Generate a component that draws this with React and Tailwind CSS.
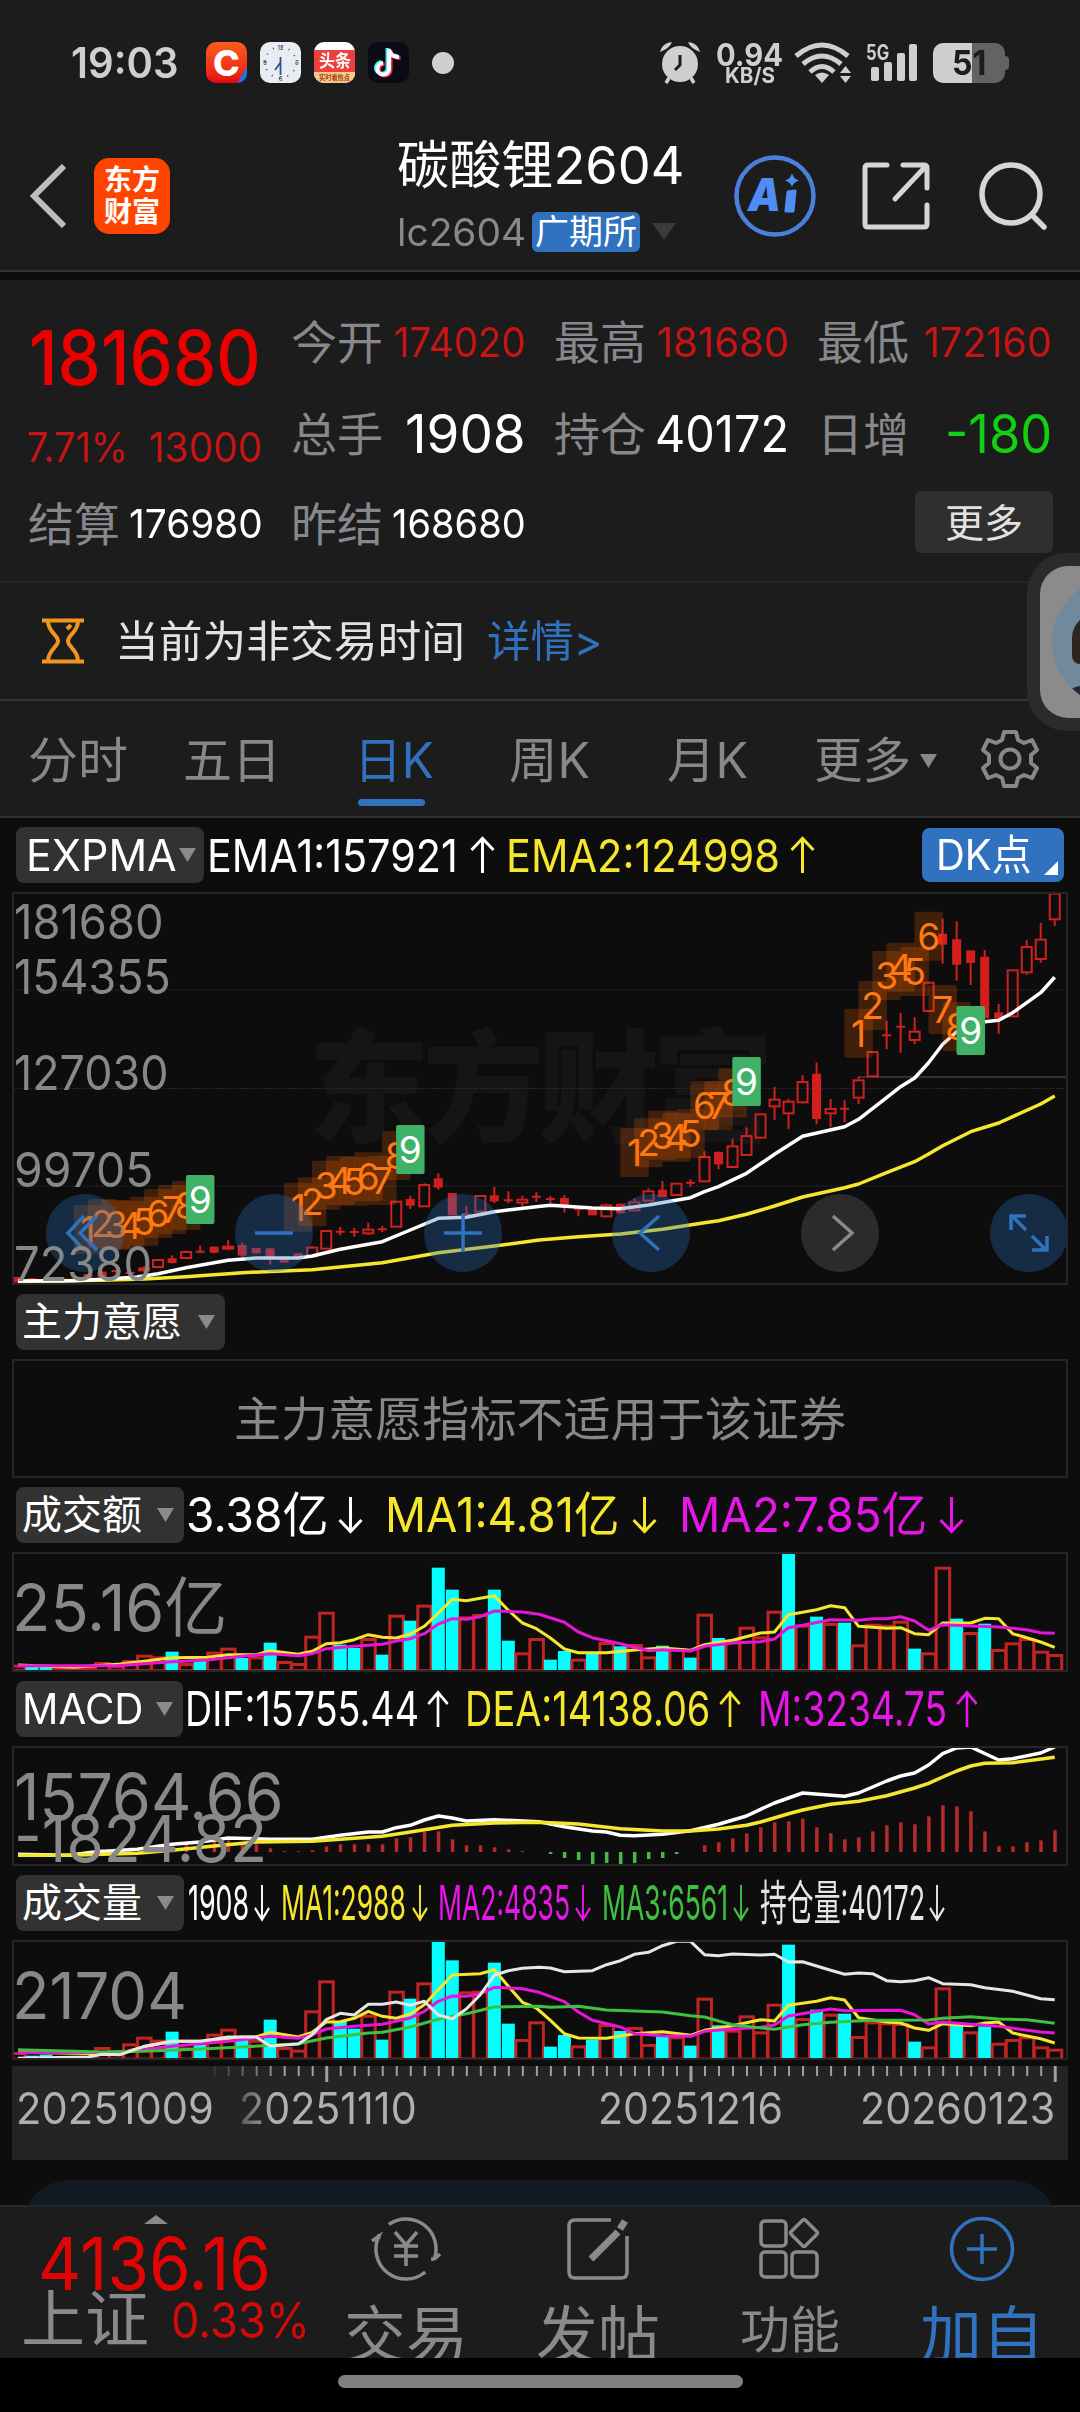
import React, { useLayoutEffect, useRef, useState } from 'react';

const FONT = "font-['Inter','Noto_Sans_CJK_SC',sans-serif]";

// Single line of text squeezed or stretched to a fixed width
function Fit({ w, className = '', children }) {
  const ref = useRef(null);
  const [scale, setScale] = useState(1);

  useLayoutEffect(() => {
    setScale(w / ref.current.offsetWidth);
  }, [w, children]);

  return (
    <span className={`block shrink-0 leading-none whitespace-nowrap ${className}`} style={{ width: w }}>
      <span ref={ref} className="inline-block origin-left" style={{ transform: `scaleX(${scale})` }}>
        {children}
      </span>
    </span>
  );
}

function Arrow({ up, w = 25, className = '' }) {
  return (
    <svg
      width={w}
      height="38"
      viewBox="0 0 25 38"
      preserveAspectRatio="none"
      className={`shrink-0 ${up ? '' : 'rotate-180'} ${className}`}
      fill="none"
      stroke="currentColor"
      strokeWidth="3"
    >
      <path d="M12.5 37V3M1.5 14L12.5 2.5L23.5 14" />
    </svg>
  );
}

function Caret({ className = '' }) {
  return (
    <svg width="17" height="14" viewBox="0 0 17 14" className={`shrink-0 ${className}`}>
      <path d="M0 0H17L8.5 14Z" fill="currentColor" />
    </svg>
  );
}

/* ---------- chart data ---------- */

const N = 75;
const X = (i) => 6 + 14.01 * i;

// [body top, body bottom, high, low, kind]  f = filled, h = hollow, x = doji
const CANDLES = [
  [1194, 1204, 1190, 1210, 'f'], [1198, 1202, 1196, 1204, 'x'], [1207, 1213, 1205, 1215, 'f'], [1198, 1206, 1193, 1210, 'f'],
  [1200, 1202, 1197, 1204, 'x'], [1185, 1194, 1183, 1196, 'f'], [1178, 1188, 1174, 1192, 'f'], [1173, 1175, 1170, 1178, 'x'],
  [1179, 1181, 1176, 1184, 'x'], [1162, 1174, 1158, 1176, 'h'], [1137, 1164, 1137, 1164, 'h'], [1138, 1146, 1126, 1150, 'f'],
  [1113, 1137, 1113, 1137, 'h'], [1115, 1117, 1097, 1120, 'x'], [1103, 1115, 1100, 1120, 'f'], [1097, 1109, 1080, 1111, 'h'],
  [1098, 1124, 1087, 1131, 'f'], [1107, 1117, 1105, 1120, 'f'], [1108, 1132, 1103, 1154, 'f'], [1139, 1143, 1137, 1146, 'f'],
  [1123, 1130, 1120, 1133, 'f'], [1100, 1132, 1098, 1134, 'h'], [1050, 1109, 1050, 1109, 'h'], [1055, 1057, 1040, 1066, 'x'],
  [1056, 1058, 1043, 1070, 'x'], [1046, 1063, 1028, 1065, 'h'], [1048, 1050, 1038, 1056, 'x'], [962, 1043, 962, 1043, 'h'],
  [960, 974, 947, 987, 'f'], [912, 982, 910, 982, 'h'], [898, 920, 880, 929, 'f'], [942, 1003, 942, 1003, 'f'],
  [1003, 1005, 978, 1006, 'x'], [945, 998, 945, 998, 'h'], [949, 961, 921, 969, 'f'], [961, 963, 934, 969, 'x'],
  [956, 971, 947, 979, 'h'], [950, 952, 937, 965, 'x'], [957, 959, 948, 970, 'x'], [957, 974, 946, 998, 'f'],
  [988, 990, 983, 1009, 'x'], [989, 1003, 987, 1004, 'f'], [973, 1012, 970, 1012, 'h'], [974, 997, 972, 1000, 'f'],
  [964, 994, 955, 994, 'h'], [931, 965, 925, 965, 'h'], [932, 948, 903, 950, 'f'], [908, 948, 908, 948, 'h'],
  [908, 911, 898, 920, 'x'], [828, 907, 814, 907, 'h'], [819, 850, 814, 868, 'f'], [796, 864, 776, 864, 'h'],
  [765, 828, 742, 828, 'h'], [700, 776, 700, 776, 'h'], [656, 682, 621, 719, 'h'], [662, 703, 656, 747, 'h'],
  [603, 670, 586, 670, 'h'], [584, 714, 548, 733, 'f'], [684, 703, 657, 742, 'h'], [686, 688, 661, 727, 'x'],
  [598, 656, 590, 672, 'h'], [513, 592, 513, 592, 'h'], [466, 468, 422, 508, 'x'], [440, 442, 399, 518, 'x'],
  [452, 483, 412, 492, 'h'], [305, 396, 305, 396, 'h'], [164, 191, 116, 251, 'f'], [181, 251, 124, 302, 'f'],
  [214, 246, 212, 315, 'f'], [233, 412, 210, 412, 'f'], [400, 412, 372, 461, 'f'], [268, 412, 268, 412, 'h'],
  [198, 280, 181, 285, 'h'], [176, 240, 129, 248, 'h'], [38, 121, 38, 138, 'h'],
];

const EMA1 =
  '0,1203 4,1202 6,1198 8.5,1191 10,1181 12,1163 15,1141 17,1134 20,1134 21,1128 23,1108 26,1085 28,1050 30,1015 32,1012 34,995 37,980 38,976 41,984 43,986 45,975 48,953 49,935 50,920 52,880 54,823 56,769 59,740 60,718 62,653 63,620 64,594 65,548 66,493 67,455 68,440 69,425 70,421 71,398 73,338 74,292';
const EMA2 =
  '0,1204 6,1201 9,1197 12,1190 16,1178 21,1169 26,1148 30,1118 34,1098 37.2,1080 40,1070 43,1062 46,1048 49,1028 50,1022 52,1003 54,978 56,951 59,923 60,912 62,878 64,845 65,822 66,797 68,755 70,729 73,672 74,648';

// nine-count markers: first bar index and the top of each tag
const COUNTS = [
  { start: 5, tops: [975, 957, 960, 962, 950, 927, 915, 903, 885] },
  { start: 20, tops: [908, 892, 842, 828, 830, 817, 828, 753, 735] },
  { start: 44, tops: [744, 715, 692, 698, 688, 603, 603, 565, 531] },
  { start: 60, tops: [386, 303, 213, 188, 201, 95, 315, 366, 378] },
];

const DOWN = [1, 2, 11, 13, 16, 18, 23, 24, 26, 28, 30, 31, 34, 35, 38, 39, 41, 43, 46, 48, 50, 55, 57, 59, 64, 67, 69];

const AMOUNT = [
  555, 560, 558, 562, 562, 560, 547, 556, 541, 525, 530, 516, 550, 540, 516, 504, 535, 530, 489, 544, 550, 468, 396, 495, 505,
  475, 525, 405, 423, 375, 264, 330, 410, 403, 330, 483, 518, 475, 540, 514, 537, 520, 487, 500, 493, 530, 498, 506, 534, 402,
  475, 480, 441, 470, 393, 219, 435, 411, 430, 429, 494, 432, 435, 423, 507, 518, 261, 417, 457, 432, 508, 488, 475, 513, 523,
];
const AMOUNT_MA1 =
  '0,556 4,563 7.3,553 9,545 11,534 13.5,533 15,525 17,525 18,513 20,524 21,515 22,492 23,489 24,480 25,465 26,473 27,475 28,463 29,440 30,400 31,359 32,363 33,356 34,348 35,392 36,430 37,447 38,475 39,508 40,519 42,519 44,511 46,505 48,512 49,495 51,482 53,460 54,457 55,405 57,390 58,378 59,384 60,440 62,446 63,444 64,462 65,465 66,430 68,430 69,416 70,417 71,462 72,474 73,487 74,503';
const AMOUNT_MA2 =
  '0,558 7,558 11,546 13.5,541 16,530 18,522 20,528 21,522 22,507 24,500 26,494 27,484 28,477 29,462 30,433 31,417 32,419 33,411 34,394 36,397 37.2,404 39,428 40,457 41,474 43,492 45,513 46,510 48,514 49,500 51,490 53,486 54,478 55,444 56,437 58,420 60,422 61,417 62,417 63,411 64,424 65,452 66,435 68,439 70,442 72,450 73,459 74,461';

const VOLUME = [
  577, 588, 585, 590, 590, 588, 562, 572, 551, 531, 540, 516, 563, 555, 522, 507, 540, 540, 480, 562, 570, 452, 362, 484, 507,
  465, 540, 393, 417, 368, 243, 302, 395, 393, 309, 492, 538, 485, 561, 526, 557, 540, 493, 514, 502, 553, 530, 530, 558, 414,
  497, 510, 467, 515, 432, 255, 475, 450, 462, 462, 529, 485, 488, 490, 546, 560, 383, 497, 515, 500, 549, 538, 530, 560, 567,
];
const VOLUME_MA1 =
  '0,578 6,582 7.3,580 9,562 11,545 13.5,545 16,532 17,532 18,518 20,532 21,518 22,487 23,486 24,476 25,455 26,470 27,476 28,463 29,435 30,390 31,346 33,342 34,330 35,380 36,428 37,445 38,482 39,522 40,535 42,536 44,522 46,516 48,527 49,512 51,498 53,480 54,484 55,437 57,425 58,414 59,421 60,474 62,487 63,490 64,505 65,512 66,492 68,498 69,490 70,487 71,520 73,537 74,550';
const VOLUME_MA2 =
  '0,579 7.3,578 11,560 15,545 18,530 20,536 21,525 22,508 24,500 26,494 28,475 29,455 30,425 31,409 32,410 33,402 34,383 36,387 37.2,398 39,426 40,457 41,482 43,502 44,522 46,528 48,530 49,515 51,508 53,503 54,496 55,469 58,448 59,453 63,452 64,465 65,493 66,487 68,494 70,500 73,517 74,520';
const VOLUME_MA3 =
  '0,570 6,577 9,575 13,568 16,562 20,552 22,535 25,520 26,518 28,502 30,479 32,462 34,442 37.2,440 38,443 40,440 42,451 46,457 48,468 49,472 50,484 51,495 54,509 56,495 58,488 61,482 65,481 66,476 68,471 70,478 72,480 74,491';
const OPEN_INTEREST =
  '0,596 5,592 6,584 7.3,585 9,560 11,545 13,545 15,532 17,532 18,559 20,553 21,525 22,480 23,461 24,466 25,434 26,434 27,427 28,437 29,425 30,466 31,477 32,448 33,405 34,347 35,333 36,326 37.2,323 38,325 39,336 41,333 42,315 43,303 44,284 45,278 46,258 47,245 48,245 49,285 50,288 51,283 53,286 54,284 55,307 56,306 58,332 59,344 60,340 61,342 62,363 63,366 64,363 65,354 66,372 68,375 69,384 71,395 73,417 74,420';

const MACD = [
  0, 0, 0, 0, 0, 4, 8, 0, 13, 8, 23, 26, 31, 0, 36, 35, 26, 23, 11, 3, 2, 5, 17, 23, 23, 23, 23, 41, 44, 61, 62, 38, 20, 20, 14,
  8, 3, 0, -6, -18, -24, -36, -33, -39, -33, -21, -18, -6, 0, 20, 29, 41, 56, 74, 89, 92, 100, 74, 56, 38, 44, 62, 80, 89, 83,
  107, 140, 137, 122, 62, 17, 17, 29, 35, 65,
];
const DIF =
  '0,1125 3.6,1128 5.6,1117 8.5,1110 11,1095 13,1088 15,1076 18,1080 21,1080 23,1068 25,1058 26,1058 27,1045 28,1038 29,1022 30,1010 31,1016 32,1025 34,1021 37.2,1027 39,1042 41,1055 42,1058 43,1068 44,1069 46,1065 48,1054 50,1035 52,1010 53,990 54,971 56,941 59,951 60,941 62,905 63,890 64,881 65,857 66,823 67,806 68,803 70,842 71,838 73,821 74,803';
const DEA =
  '0,1128 3.6,1128 8.5,1122 11,1113 14,1100 17,1088 21,1086 26,1071 28,1058 31,1038 34,1031 37.2,1029 40,1034 43,1048 46,1055 48,1055 50,1049 52,1038 53,1028 55,1003 56,992 58,975 60,966 62,949 64,926 65,912 66,893 67,875 68,860 69,852 71,850 74,834';

function Line({ pts, top, color, width = 3 }) {
  const points = pts
    .split(' ')
    .map((p) => {
      const [i, y] = p.split(',').map(Number);
      return `${X(i).toFixed(1)},${((y - top) / 3).toFixed(1)}`;
    })
    .join(' ');
  return <polyline points={points} fill="none" stroke={color} strokeWidth={width} strokeLinejoin="round" />;
}

function Bars({ data, top, base }) {
  return data.map((v, i) => {
    const y = (v - top) / 3;
    const bottom = (base - top) / 3;
    if (DOWN.includes(i)) {
      return <rect key={i} x={X(i) - 6.5} y={y} width="13" height={bottom - y} fill="#00ffff" />;
    }
    return (
      <rect key={i} x={X(i) - 6.5} y={y + 1.5} width="13.5" height={Math.max(bottom - y - 1.5, 2)} fill="none" stroke="#c22323" strokeWidth="3" />
    );
  });
}

function Panel({ className, children }) {
  return <div className={`relative mx-3 overflow-hidden border-2 border-[#262626] ${className}`}>{children}</div>;
}

function PanelLabel({ w, className, children }) {
  return (
    <div className={`absolute left-0 text-[#888888] ${className}`}>
      <Fit w={w}>{children}</Fit>
    </div>
  );
}

function KChart() {
  const py = (v) => (v - 36) / 3;
  return (
    <svg width="1056" height="393" className="absolute -top-0.5 -left-0.5">
      <text x="296" y="240" textLength="466" className="font-['Noto_Sans_CJK_SC',sans-serif] text-[122px] font-black" fill="#151515">
        东方财富
      </text>
      {[98, 196.5, 294].map((y) => (
        <line key={y} x1="0" x2="1056" y1={y} y2={y} stroke="#303030" strokeDasharray="1.5 1.5" />
      ))}
      <line x1="846" x2="1056" y1="185" y2="185" stroke="#333333" strokeWidth="2" />
      {CANDLES.map(([t, b, hi, lo, kind], i) => (
        <g key={i} stroke="#d02020" strokeWidth="2">
          {kind === 'x' && <path d={`M${X(i)} ${py(hi)}V${py(lo)}M${X(i) - 4.5} ${py(t)}H${X(i) + 4.5}`} />}
          {kind === 'f' && (
            <>
              <line x1={X(i)} x2={X(i)} y1={py(hi)} y2={py(lo)} />
              <rect x={X(i) - 3.5} y={py(t)} width="7" height={Math.max((b - t) / 3, 2)} fill="#d61c1c" />
            </>
          )}
          {kind === 'h' && (
            <>
              <path d={`M${X(i)} ${py(hi)}V${py(t)}M${X(i)} ${py(b)}V${py(lo)}`} />
              <rect x={X(i) - 5} y={py(t) + 1} width="10" height={Math.max((b - t) / 3 - 2, 2)} fill="none" />
            </>
          )}
        </g>
      ))}
      <Line pts={EMA2} top={36} color="#f5e72e" width={3.5} />
      <Line pts={EMA1} top={36} color="#ffffff" width={3.5} />
      {COUNTS.map(({ start, tops }) =>
        tops.map((t, k) => {
          const cx = X(start + k);
          const last = k === 8;
          return (
            <g key={`${start}-${k}`}>
              <rect x={cx - 14.2} y={py(t)} width="28.5" height="49" rx="2" fill={last ? '#3fb267' : '#ff6a00'} fillOpacity={last ? 1 : 0.21} />
              <text x={cx} y={py(t) + 38} textAnchor="middle" fill={last ? '#ffffff' : '#ff7a12'} className="text-[37px]">
                {k + 1}
              </text>
            </g>
          );
        })
      )}
    </svg>
  );
}

const CONTROLS = [
  'M-1 -17L-17 0L-1 17M12 -17L-5 0L12 17',
  'M-19 0H19',
  'M-19 0H19M0 -19V19',
  'M8 -17L-11 0L8 17',
  'M-7 -17L12 0L-7 17',
  'M-18 -3V-17H-3M-17 -17L-3 -3M18 3V17H3M17 17L3 3',
];

function ChartControls() {
  return (
    <div className="absolute top-[300px] -right-0.5 left-[32px] flex h-[78px] justify-between">
      {CONTROLS.map((d, i) => (
        <button key={i} className={`size-[78px] rounded-full ${i === 4 ? 'bg-[#2b2b2b]' : 'bg-[#2a70bf]/32'}`}>
          <svg viewBox="-39 -39 78 78" fill="none" stroke={i === 4 ? '#8a8a8e' : '#3072bd'} strokeWidth="3.5">
            <path d={d} />
          </svg>
        </button>
      ))}
    </div>
  );
}

function Picker({ w, textW, className = '', children }) {
  return (
    <button
      className={`ml-4 flex h-14 shrink-0 items-center justify-between rounded-lg bg-[#323232] pr-2.5 pl-[6px] text-white ${className}`}
      style={{ width: w }}
    >
      <Fit w={textW}>{children}</Fit>
      <Caret className="text-[#8a8a8e]" />
    </button>
  );
}

/* ---------- status bar ---------- */

function StatusBar() {
  return (
    <div className="flex h-[125px] items-center pl-[71px] text-[#cfcfcf]">
      <Fit w={107} className="text-[42px] font-semibold">19:03</Fit>
      <div className="ml-[28px] flex gap-[13px]">
        <div className="relative flex size-[41px] items-center justify-center overflow-hidden rounded-[10px] bg-linear-to-b from-[#ff5a1f] to-[#e60012]">
          <span className="text-[36px] leading-none font-extrabold text-white">C</span>
          <span className="absolute -right-4 -bottom-2.5 h-5 w-7 -rotate-60 bg-[#1677e8]"></span>
        </div>
        <svg width="41" height="41" viewBox="0 0 41 41">
          <rect width="41" height="41" rx="10" fill="#e9edf3" />
          <circle cx="20.5" cy="20.5" r="15.5" fill="none" stroke="#555" strokeWidth="2" strokeDasharray="1 7.1" />
          <path d="M20.5 20.5L15 28M20.5 15V33" stroke="#32507a" strokeWidth="1.8" />
          <text x="20.5" y="8" fontSize="6" textAnchor="middle" fill="#222">12</text>
          <text x="20.5" y="38.5" fontSize="6" textAnchor="middle" fill="#222">6</text>
          <text x="3" y="22.5" fontSize="6" fill="#222">9</text>
          <text x="35" y="22.5" fontSize="6" fill="#222">3</text>
        </svg>
        <div className="flex size-[41px] flex-col items-center overflow-hidden rounded-[10px] bg-white">
          <div className="mt-2 flex h-[22px] w-full items-center justify-center bg-[#ee3f3f]">
            <Fit w={32} className="text-[17px] font-bold text-white">头条</Fit>
          </div>
          <div className="flex h-[11px] w-full items-center justify-center bg-[#f6c98e]">
            <Fit w={31} className="text-[7px] font-bold text-[#a03a10]">实时看热点</Fit>
          </div>
        </div>
        <svg width="41" height="41" viewBox="0 0 41 41" fill="none" strokeWidth="4">
          <rect width="41" height="41" rx="10" fill="#0b0b16" />
          <path d="M21 7V27A5.8 5.8 0 1 1 15 21M21 8Q23 15 31 15" stroke="#25f4ee" transform="translate(-1.5 -1)" />
          <path d="M21 7V27A5.8 5.8 0 1 1 15 21M21 8Q23 15 31 15" stroke="#fe2c55" transform="translate(1.5 1)" />
          <path d="M21 7V27A5.8 5.8 0 1 1 15 21M21 8Q23 15 31 15" stroke="#ffffff" />
        </svg>
      </div>
      <span className="ml-[23px] size-[22px] rounded-full bg-[#cfcfcf]"></span>

      <svg width="42" height="43" viewBox="0 0 42 43" className="ml-[205px]">
        <circle cx="21" cy="23" r="18" fill="#cfcfcf" />
        <path d="M1 11Q3 2 13 1Q11 7 1 11ZM41 11Q39 2 29 1Q31 7 41 11Z" fill="#cfcfcf" />
        <path d="M10 37L7 42M32 37L35 42" stroke="#cfcfcf" strokeWidth="3.500" fill="none" />
        <path d="M21 14V24L16 29" stroke="#1c1c1c" strokeWidth="3" fill="none" />
      </svg>
      <div className="ml-[15px] flex flex-col items-center">
        <Fit w={67} className="text-[31px] font-bold">0.94</Fit>
        <Fit w={50} className="-mt-[5px] text-[21px] font-bold">KB/S</Fit>
      </div>
      <svg width="58" height="42" viewBox="0 0 58 42" className="ml-[11px]" fill="none" stroke="#cfcfcf" strokeWidth="5">
        <path d="M2 14Q28 -8 54 14M9 22Q28 6 47 22M16 30Q28 19 40 30" />
        <path d="M28 41L21 33Q28 28 35 33Z" fill="#cfcfcf" stroke="none" />
        <path d="M46 31L51.500 24L57 31ZM46 34L51.500 41L57 34Z" fill="#cfcfcf" stroke="none" />
      </svg>
      <div className="relative ml-[14px] h-[42px] w-[53px]">
        <span className="absolute top-0 left-0">
          <Fit w={23} className="text-[21px] font-bold">5G</Fit>
        </span>
        <svg width="53" height="42" fill="#cfcfcf">
          <rect x="5" y="25" width="8" height="14" rx="2" />
          <rect x="18" y="20" width="8" height="19" rx="2" />
          <rect x="31" y="11" width="8" height="28" rx="2" />
          <rect x="43" y="2" width="8" height="37" rx="2" />
        </svg>
      </div>
      <div className="ml-[14px] flex h-10 w-[72px] items-center justify-center rounded-[10px] bg-linear-to-r from-[#cfcfcf] from-54% to-[#636363] to-54% text-[#1c1c1c]">
        <Fit w={34} className="text-[34px] font-bold">51</Fit>
      </div>
      <span className="h-3.5 w-[4px] rounded-r bg-[#636363]"></span>
    </div>
  );
}

function Header() {
  return (
    <div className="flex h-[147px] items-center border-b-2 border-[#333333] pb-1 pl-[30px]">
      <svg width="36" height="64" viewBox="0 0 36 64" fill="none" stroke="#bdbdbd" strokeWidth="6">
        <path d="M34 2L4 32L34 62" />
      </svg>
      <div className="ml-[28px] flex size-[76px] flex-col items-center justify-center gap-1 rounded-[15px] bg-[#ff4400] text-[28px] font-bold text-white">
        <Fit w={56}>东方</Fit>
        <Fit w={56}>财富</Fit>
      </div>
      <div className="ml-[227px] flex w-[290px] flex-col gap-5">
        <Fit w={287} className="text-[52px] text-white">碳酸锂2604</Fit>
        <div className="flex h-10 items-center">
          <Fit w={129} className="text-[38px] text-[#87878c]">lc2604</Fit>
          <span className="ml-1.5 flex h-10 w-[108px] items-center justify-center rounded-md bg-[#3072c0] text-white">
            <Fit w={102} className="text-[34px]">广期所</Fit>
          </span>
          <svg width="24" height="17" viewBox="0 0 24 17" className="ml-3">
            <path d="M0 0H24L12 17Z" fill="#3b3b3b" />
          </svg>
        </div>
      </div>
      <svg width="82" height="82" viewBox="0 0 82 82" className="ml-[47px]">
        <circle cx="41" cy="41" r="38.500" fill="none" stroke="#4a80dc" strokeWidth="4.500" />
        <text x="14" y="56" fontSize="46" fontWeight="900" fontStyle="italic" textLength="33" lengthAdjust="spacingAndGlyphs" fill="#4f8df5">A</text>
        <path d="M54 37L61 36L59 56L52 56Z" fill="#4f8df5" stroke="#4f8df5" strokeWidth="3" strokeLinejoin="round" />
        <path d="M58 18Q59.500 24 65 25.500Q59.500 27 58 32Q56.500 27 51 25.500Q56.500 24 58 18Z" fill="#4f8df5" />
      </svg>
      <svg width="68" height="68" viewBox="0 0 68 68" className="ml-[46px]" fill="none" stroke="#d6d6d6" strokeWidth="5" strokeLinecap="round">
        <path d="M25 3H6Q3 3 3 6V62Q3 65 6 65H62Q65 65 65 62V43M41 3H62Q65 3 65 6V26M64 4L33 37" />
      </svg>
      <svg width="68" height="68" viewBox="0 0 68 68" className="ml-[49px]" fill="none" stroke="#d6d6d6" strokeWidth="5.500" strokeLinecap="round">
        <circle cx="32" cy="32" r="29" />
        <path d="M53 53L65 65" />
      </svg>
    </div>
  );
}

/* ---------- quote ---------- */

function Cell({ label, w, className, children }) {
  return (
    <div className="flex items-center justify-between">
      <Fit w={92} className="-ml-px text-[46px] text-[#87878c]">{label}</Fit>
      <Fit w={w} className={className}>{children}</Fit>
    </div>
  );
}

function Quote() {
  return (
    <div className="mt-2 grid h-[303px] grid-cols-[234px_234px_234px_234px] grid-rows-[92px_92px_88px] gap-x-[29px] border-b-2 border-[#262626] bg-[#1c1c1c] pt-4 pl-[29px]">
      <div className="row-span-2">
        <Fit w={232} className="mt-[23px] text-[76px] font-medium text-[#eb0000]">181680</Fit>
        <div className="mt-8 flex justify-between text-[41px] text-[#c81414]">
          <Fit w={101} className="-ml-0.5">7.71%</Fit>
          <Fit w={114}>13000</Fit>
        </div>
      </div>
      <Cell label="今开" w={132} className="text-[41px] text-[#c81414]">174020</Cell>
      <Cell label="最高" w={132} className="text-[41px] text-[#c81414]">181680</Cell>
      <Cell label="最低" w={128} className="text-[41px] text-[#c81414]">172160</Cell>
      <Cell label="总手" w={121} className="text-[53px] text-white">1908</Cell>
      <Cell label="持仓" w={134} className="text-[50px] text-white">40172</Cell>
      <Cell label="日增" w={107} className="text-[53px] text-[#12d012]">-180</Cell>
      <Cell label="结算" w={134} className="text-[40px] text-white">176980</Cell>
      <Cell label="昨结" w={134} className="text-[40px] text-white">168680</Cell>
      <div></div>
      <div className="flex items-center justify-end pb-1">
        <button className="-mr-px h-[62px] w-[138px] rounded-md bg-[#2f2f2f] text-[39px] leading-none text-[#e2e2e2]">更多</button>
      </div>
    </div>
  );
}

function Notice() {
  return (
    <div className="flex h-[118px] items-center border-b-2 border-[#333333] pl-[42px]">
      <svg width="42" height="46" viewBox="0 0 42 46" fill="none" stroke="#f0961e" strokeWidth="4">
        <path d="M0 2.500H42M0 43.500H42M6 3C6 14 16 17 16 23S6 32 6 43M36 3C36 14 26 17 26 23S36 32 36 43M25 11L29 7" />
      </svg>
      <Fit w={350} className="ml-[31px] text-[43px] text-[#e2e2e2]">当前为非交易时间</Fit>
      <Fit w={115} className="ml-[22px] text-[43px] text-[#3072bd]">详情&gt;</Fit>
    </div>
  );
}

function Tabs() {
  return (
    <div className="flex h-[117px] items-center border-b-2 border-[#333333] pt-1 pl-[28px] text-[49px] text-[#87878c]">
      <Fit w={100}>分时</Fit>
      <Fit w={98} className="ml-[55px]">五日</Fit>
      <div className="relative ml-[73px] text-[#3072bd]">
        <Fit w={80}>日K</Fit>
        <span className="absolute top-[63px] left-1 h-[7px] w-[67px] rounded-full bg-[#3072bd]"></span>
      </div>
      <Fit w={81} className="ml-[75px]">周K</Fit>
      <Fit w={81} className="ml-[77px]">月K</Fit>
      <Fit w={97} className="ml-[66px]">更多</Fit>
      <Caret className="ml-[9px]" />
      <svg width="60" height="60" viewBox="-30 -30 60 60" className="-mt-1 ml-[43px]" fill="none" stroke="currentColor" strokeWidth="4">
        <path
          strokeLinejoin="round"
          d="M-6 -27H6L8 -19L14 -16L22 -19L27 -9L21 -4V4L27 9L22 19L14 16L8 19L6 27H-6L-8 19L-14 16L-22 19L-27 9L-21 4V-4L-27 -9L-22 -19L-14 -16L-8 -19Z"
        />
        <circle r="9.500" />
      </svg>
    </div>
  );
}

/* ---------- bottom ---------- */

function TimeAxis() {
  return (
    <div className="relative mx-3 mt-1.5 h-[94px] bg-[#242426]">
      <svg width="1056" height="18" className="block">
        {Array.from({ length: N }, (_, i) => i)
          .filter((i) => i > 13)
          .map((i) => {
            const big = i === 22 || i === 48 || i === 74;
            return (
              <line
                key={i}
                x1={X(i) + 0.5}
                x2={X(i) + 0.5}
                y1="0"
                y2={big ? 16 : 10}
                stroke="#a0a0a0"
                strokeWidth={big ? 3 : 2}
                opacity={Math.min((i - 13) / 6, 1)}
              />
            );
          })}
      </svg>
      <div className="flex pt-[2px] pl-1 text-[44px] text-[#b0b0b0]">
        <Fit w={198}>20251009</Fit>
        <Fit w={178} className="ml-[25px] [mask-image:linear-gradient(to_right,rgba(0,0,0,0.35),#000_20%)]">20251110</Fit>
        <Fit w={185} className="ml-[181px]">20251216</Fit>
        <Fit w={195} className="ml-[77px]">20260123</Fit>
      </div>
    </div>
  );
}

function NavItem({ label, className = '', children }) {
  return (
    <div className={`flex w-[192px] shrink-0 flex-col items-center pt-2 ${className}`}>
      <svg width="76" height="68" viewBox="-38 -34 76 68" fill="none" stroke="currentColor" strokeWidth="3.500" className="shrink-0">
        {children}
      </svg>
      <span className="mt-[22px] leading-none whitespace-nowrap">{label}</span>
    </div>
  );
}

function BottomBar() {
  return (
    <div className="flex h-[153px] overflow-hidden border-t-2 border-[#22282c] bg-[#1c1c1c] text-[62px] text-[#8a8a8e]">
      <div className="w-[310px] shrink-0 pl-[22px]">
        <svg width="24" height="9" viewBox="0 0 24 9" className="mt-2 ml-[122px] block">
          <path d="M0 9L12 0L24 9Z" fill="currentColor" />
        </svg>
        <Fit w={233} className="mt-[3px] ml-[16px] text-[73px] text-[#e00505]">4136.16</Fit>
        <div className="-mt-[11px] flex items-center">
          <Fit w={128} className="-ml-px">上证</Fit>
          <Fit w={139} className="ml-[22px] text-[49px] text-[#d40a0a]">0.33%</Fit>
        </div>
      </div>
      <NavItem label="交易">
        <path d="M-17.200 -24.600A30 30 0 0 1 28.200 10.300L34 5M28.200 10.300L25 10M19.300 23A30 30 0 0 1 -27.200 -12.700L-34 -8M-27.200 -15V-10M-11 -17L0 -4L11 -17M0 -4V17M-12 -3H12M-12 7H12" />
      </NavItem>
      <NavItem label="发帖">
        <path d="M13 -29H-23Q-29 -29 -29 -23V23Q-29 29 -23 29H23Q29 29 29 23V-13" />
        <path d="M27 -28L22 -20M20 -17L-7 10" strokeWidth="7" />
      </NavItem>
      <NavItem label="功能" className="text-[50px]">
        <rect x="-29" y="-28" width="25" height="25" rx="4" />
        <rect x="-29" y="3" width="25" height="25" rx="4" />
        <rect x="2" y="3" width="25" height="25" rx="4" />
        <rect x="4" y="-26" width="20" height="20" rx="2" transform="rotate(45 14 -16)" />
      </NavItem>
      <NavItem label="加自" className="text-[#3072bd]">
        <circle r="30.500" />
        <path d="M-15 0H15M0 -15V15" />
      </NavItem>
    </div>
  );
}

export default function App() {
  return (
    <div className={`relative h-[2412px] w-[1080px] overflow-hidden bg-[#0d0d0d] ${FONT}`}>
      <div className="bg-[#1c1c1c]">
        <StatusBar />
        <Header />
      </div>
      <Quote />
      <div className="bg-[#1c1c1c]">
        <Notice />
        <Tabs />
      </div>

      {/* main chart */}
      <div className="flex h-[74px] items-center text-[45px] text-white">
        <Picker w={188} textW={151} className="pr-2! pl-2.5! text-[44px]">EXPMA</Picker>
        <Fit w={251} className="ml-[3px]">EMA1:157921</Fit>
        <Arrow up className="ml-[12px]" />
        <Fit w={274} className="ml-[11px] text-[#f5e72e]">EMA2:124998</Fit>
        <Arrow up className="ml-[10px] text-[#f5e72e]" />
        <div className="relative ml-[107px] flex h-[54px] w-[142px] items-center rounded-lg bg-[#3072c0] pl-[14px]">
          <Fit w={96} className="text-[42px]">DK点</Fit>
          <svg width="14" height="14" className="absolute right-1.5 bottom-[7px]">
            <path d="M14 0V14H0Z" fill="#ffffff" />
          </svg>
        </div>
      </div>
      <Panel className="h-[393px]">
        <KChart />
        <ChartControls />
        <PanelLabel w={149} className="top-[4px] text-[48px]">181680</PanelLabel>
        <PanelLabel w={157} className="top-[59px] text-[48px]">154355</PanelLabel>
        <PanelLabel w={154} className="top-[155px] text-[48px]">127030</PanelLabel>
        <PanelLabel w={139} className="top-[252px] text-[48px]">99705</PanelLabel>
        <PanelLabel w={138} className="top-[346px] text-[48px]">72380</PanelLabel>
      </Panel>

      <div className="flex h-[74px] items-center">
        <Picker w={209} textW={160} className="text-[40px]">主力意愿</Picker>
      </div>
      <Panel className="flex h-[119px] items-center justify-center">
        <Fit w={612} className="text-[47px] text-[#87878c]">主力意愿指标不适用于该证券</Fit>
      </Panel>

      {/* turnover */}
      <div className="flex h-[74px] items-center text-[48px] text-white">
        <Picker w={168} textW={120} className="text-[40px]">成交额</Picker>
        <Fit w={142} className="ml-[2px]">3.38亿</Fit>
        <Arrow className="ml-[10px]" />
        <Fit w={235} className="ml-[22px] text-[#f5e72e]">MA1:4.81亿</Fit>
        <Arrow className="ml-[12px] text-[#f5e72e]" />
        <Fit w={248} className="ml-[22px] text-[#e815e8]">MA2:7.85亿</Fit>
        <Arrow className="ml-[12px] text-[#e815e8]" />
      </div>
      <Panel className="h-[120px]">
        <PanelLabel w={215} className="top-[21px] -ml-0.5 text-[65px]">25.16亿</PanelLabel>
        <svg width="1056" height="120" className="absolute -top-0.5 -left-0.5">
          <Bars data={AMOUNT} top={217} base={573} />
          <Line pts={AMOUNT_MA1} top={217} color="#f5e72e" />
          <Line pts={AMOUNT_MA2} top={217} color="#e815d8" />
        </svg>
      </Panel>

      {/* macd */}
      <div className="flex h-[74px] items-center text-[48px] text-white">
        <Picker w={167} textW={121} className="text-[42px]">MACD</Picker>
        <Fit w={234} className="ml-[2px]">DIF:15755.44</Fit>
        <Arrow up w={22} className="ml-[8px]" />
        <Fit w={245} className="ml-[16px] text-[#f5e72e]">DEA:14138.06</Fit>
        <Arrow up w={22} className="ml-[9px] text-[#f5e72e]" />
        <Fit w={189} className="ml-[17px] text-[#e815e8]">M:3234.75</Fit>
        <Arrow up w={22} className="ml-[9px] text-[#e815e8]" />
      </div>
      <Panel className="h-[120px]">
        <svg width="1056" height="120" className="absolute -top-0.5 -left-0.5">
          {MACD.map((v, i) =>
            v === 0 ? null : (
              <rect key={i} x={X(i) - 1.5} y={v > 0 ? 106 - v / 3 : 106} width="3.5" height={Math.abs(v) / 3} fill={v > 0 ? '#b52a2a' : '#48b848'} />
            )
          )}
          <Line pts={DIF} top={800} color="#ffffff" width={3.5} />
          <Line pts={DEA} top={800} color="#f5e72e" width={3.5} />
        </svg>
        <PanelLabel w={270} className="top-[16px] text-[65px]">15764.66</PanelLabel>
        <PanelLabel w={253} className="top-[58px] text-[65px]">-1824.82</PanelLabel>
      </Panel>

      {/* volume */}
      <div className="flex h-[74px] items-center text-[48px] text-white">
        <Picker w={168} textW={120} className="text-[40px]">成交量</Picker>
        <Fit w={61} className="ml-[4px]">1908</Fit>
        <Arrow w={16} className="ml-[5px]" />
        <Fit w={125} className="ml-[11px] text-[#f5e72e]">MA1:2988</Fit>
        <Arrow w={16} className="ml-[6px] text-[#f5e72e]" />
        <Fit w={132} className="ml-[10px] text-[#e815e8]">MA2:4835</Fit>
        <Arrow w={16} className="ml-[5px] text-[#e815e8]" />
        <Fit w={126} className="ml-[11px] text-[#3fc03f]">MA3:6561</Fit>
        <Arrow w={16} className="ml-[5px] text-[#3fc03f]" />
        <Fit w={165} className="ml-[11px] text-[#e6e6e6]">持仓量:40172</Fit>
        <Arrow w={16} className="ml-[4px] text-[#e6e6e6]" />
      </div>
      <Panel className="h-[120px]">
        <PanelLabel w={175} className="top-[21px] -ml-0.5 text-[65px]">21704</PanelLabel>
        <svg width="1056" height="120" className="absolute -top-0.5 -left-0.5">
          <Bars data={VOLUME} top={241} base={598} />
          <Line pts={VOLUME_MA1} top={241} color="#f5e72e" />
          <Line pts={VOLUME_MA2} top={241} color="#e815d8" />
          <Line pts={VOLUME_MA3} top={241} color="#3fc03f" />
          <Line pts={OPEN_INTEREST} top={241} color="#e6e6e6" />
        </svg>
      </Panel>
      <TimeAxis />

      <div className="mx-[22px] mt-5 h-[25px] overflow-hidden">
        <div className="h-[100px] rounded-[48px] bg-[#111922]"></div>
      </div>
      <BottomBar />
      <div className="h-[54px] bg-black pt-[17px]">
        <div className="mx-auto h-[13px] w-[405px] rounded-full bg-[#808080]"></div>
      </div>

      {/* floating assistant, half off screen */}
      <div className="absolute top-[553px] -right-[100px] h-[178px] w-[153px] rounded-[40px] bg-[#2b2b2b] p-[13px]">
        <div className="relative h-full w-full overflow-hidden rounded-[28px] bg-[#8b8b8b]">
          <div className="absolute top-[12px] left-[12px] size-[128px] overflow-hidden rounded-full bg-[#70899c]">
            <div className="absolute top-[36px] left-[20px] h-[50px] w-[90px] rounded-l-3xl rounded-bl-lg bg-[#2e2420]"></div>
            <div className="absolute top-[108px] left-[10px] h-10 w-24 rounded-full bg-[#23282e]"></div>
          </div>
        </div>
      </div>
    </div>
  );
}
